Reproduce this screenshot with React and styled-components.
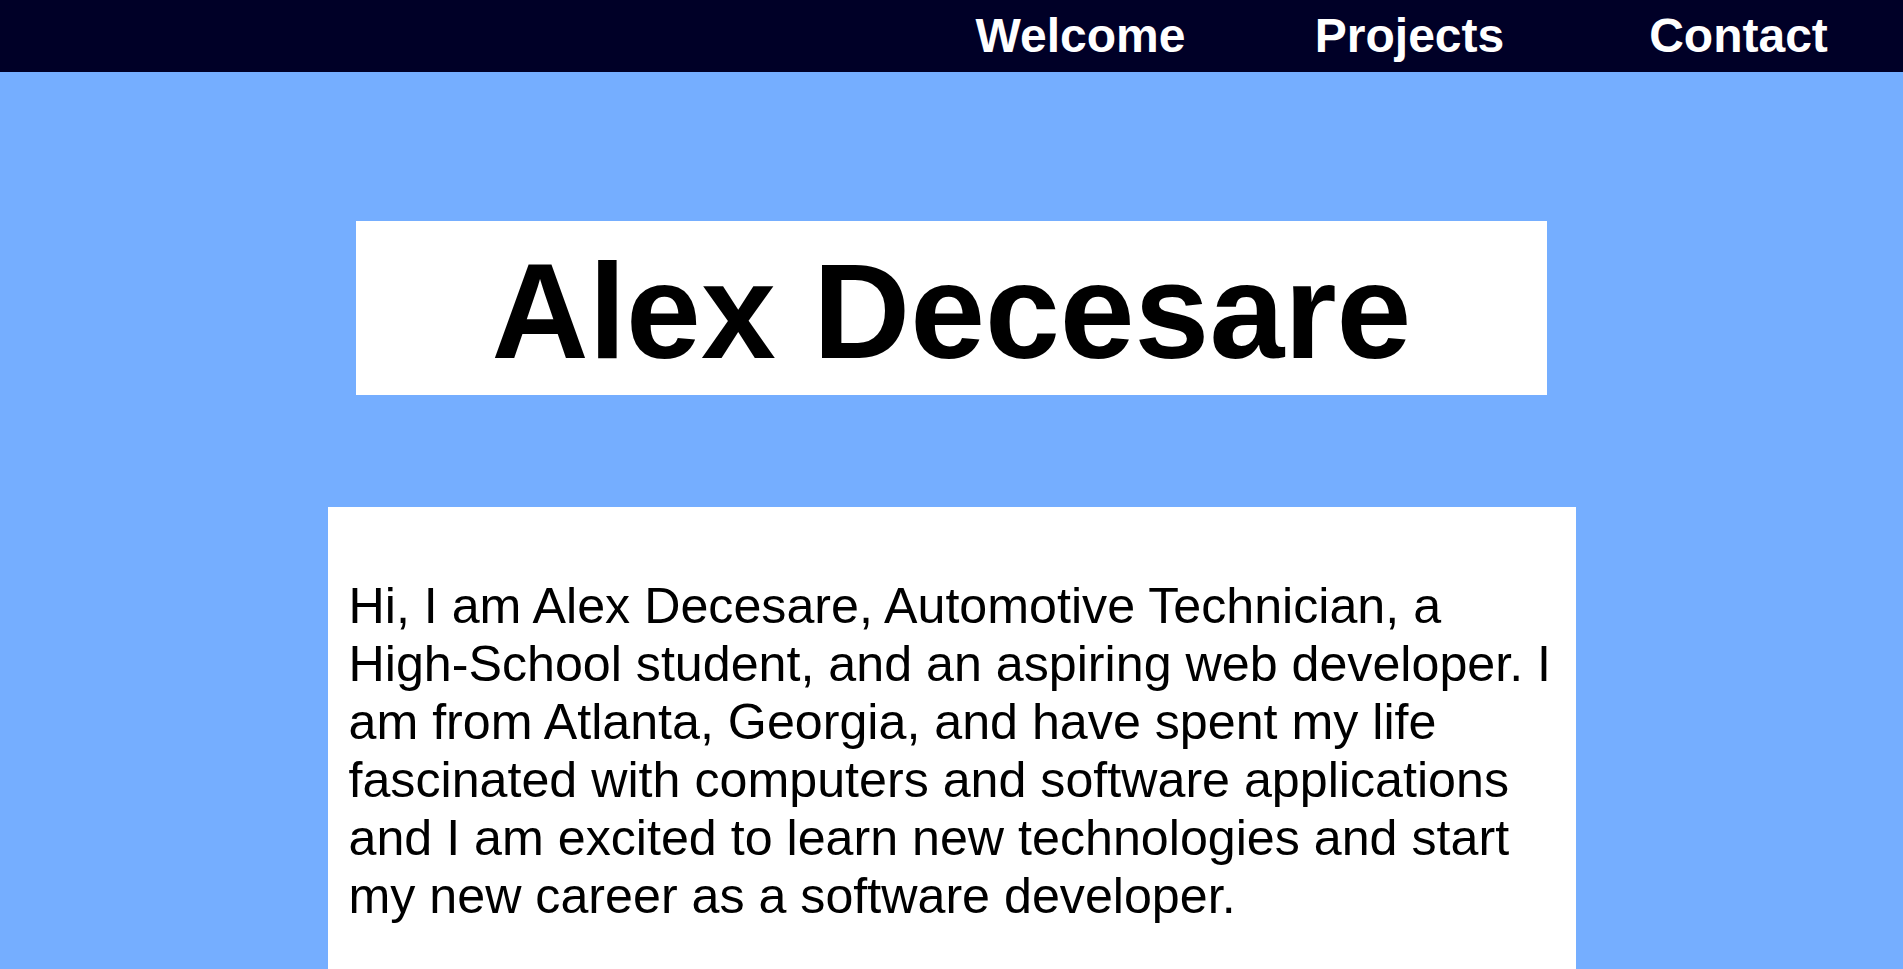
import React from 'react';
import styled, { createGlobalStyle } from 'styled-components';

const GlobalStyle = createGlobalStyle`
  html, body {
    margin: 0;
    padding: 0;
    background: #75aeff;
    font-family: "Liberation Sans", Arial, sans-serif;
  }
`;

const NavBar = styled.nav`
  height: 72px;
  background: #000027;
  display: flex;
  justify-content: flex-end;
`;

const NavList = styled.ul`
  list-style: none;
  margin: 0;
  padding: 0;
  display: grid;
  grid-template-columns: repeat(3, 329px);
`;

const NavItem = styled.li`
  text-align: center;
  line-height: 72px;
  font-size: 48px;
  font-weight: bold;

  a {
    color: #fff;
    text-decoration: none;
  }
`;

const Main = styled.main`
  display: flex;
  flex-direction: column;
  align-items: center;
  padding-top: 149px;
`;

const TitleBox = styled.header`
  width: 1191px;
  background: #fff;
  padding: 13px 0 6px;
  text-align: center;
`;

const Name = styled.h1`
  margin: 0;
  font-size: 134.5px;
  font-weight: bold;
  line-height: normal;
  color: #000;
`;

const Bio = styled.section`
  width: 1248px;
  box-sizing: border-box;
  margin-top: 112px;
  background: #fff;
  padding: 70px 15px 60px 21px;
`;

const BioText = styled.p`
  margin: 0;
  font-size: 50.2px;
  line-height: 58px;
  color: #000;
`;

const links = ['Welcome', 'Projects', 'Contact'];

const App = () => (
  <>
    <GlobalStyle />
    <NavBar>
      <NavList>
        {links.map((l) => (
          <NavItem key={l}>
            <a href="#">{l}</a>
          </NavItem>
        ))}
      </NavList>
    </NavBar>
    <Main>
      <TitleBox>
        <Name>Alex Decesare</Name>
      </TitleBox>
      <Bio>
        <BioText>
          Hi, I am Alex Decesare, Automotive Technician, a High-School student, and an aspiring web
          developer. I am from Atlanta, Georgia, and have spent my life fascinated with computers and
          software applications and I am excited to learn new technologies and start my new career
          as a software developer.
        </BioText>
      </Bio>
    </Main>
  </>
);

export default App;
